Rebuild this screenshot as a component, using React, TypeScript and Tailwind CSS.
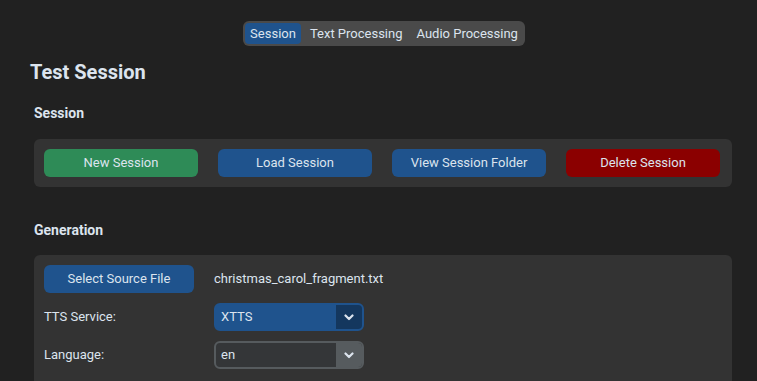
import React, { useState } from 'react';

const font = { fontFamily: 'Roboto, "Noto Sans", sans-serif' };

function Chevron() {
    return (
        <svg width="10" height="7" viewBox="0 0 10 7" className="block">
            <path d="M1.5 1.5 L5 5 L8.5 1.5" fill="none" stroke="#dce4ee" strokeWidth="2.2" strokeLinecap="round" strokeLinejoin="round" />
        </svg>
    );
}

function Combo({ value, blue }: { value: string; blue?: boolean }) {
    return (
        <div
            className={
                blue
                    ? 'flex h-[28px] w-[150px] rounded-[6px] overflow-hidden bg-[#1f538d] border-2 border-[#1f538d]'
                    : 'flex h-[28px] w-[150px] rounded-[6px] overflow-hidden bg-[#343638] border-2 border-[#565b5e]'
            }
        >
            <div className="flex-1 flex items-center pl-[5px] text-[13px] text-[#dce4ee]">{value}</div>
            <div className={blue ? 'w-[26px] flex items-center justify-center bg-[#14375e]' : 'w-[26px] flex items-center justify-center bg-[#565b5e]'}>
                <Chevron />
            </div>
        </div>
    );
}

export default function App() {
    const [tab, setTab] = useState('Session');
    const tabs = ['Session', 'Text Processing', 'Audio Processing'];

    return (
        <div className="w-[757px] h-[381px] overflow-hidden bg-[#212121] text-[#dce4ee]" style={font}>
            {/* tab bar */}
            <div className="flex justify-center pt-[21px] pl-[11px]">
                <div className="flex h-[25px] p-[2px] gap-[4px] rounded-[6px] bg-[#4a4a4a]">
                    {tabs.map((t) => (
                        <button
                            key={t}
                            onClick={() => setTab(t)}
                            className={
                                t === tab
                                    ? 'px-[5px] rounded-[4px] bg-[#1f538d] text-[13px] leading-[21px] text-[#dce4ee]'
                                    : 'px-[5px] rounded-[4px] text-[13px] leading-[21px] text-[#dce4ee]'
                            }
                        >
                            {t}
                        </button>
                    ))}
                </div>
            </div>

            <div className="pl-[30px] pr-[25px]">
                <h1 className="mt-[14px] text-[20px] leading-[24px] font-bold text-[#dce4ee]">Test Session</h1>

                <div className="pl-[4px]">
                    <h2 className="mt-[20px] text-[14px] leading-[18px] font-bold">Session</h2>
                    <div className="mt-[17px] flex gap-[20px] p-[10px] rounded-[6px] bg-[#333333]">
                        <button className="w-[154px] h-[28px] rounded-[6px] bg-[#2e8b57] text-[13px] text-[#dce4ee]">New Session</button>
                        <button className="w-[154px] h-[28px] rounded-[6px] bg-[#1f538d] text-[13px] text-[#dce4ee]">Load Session</button>
                        <button className="w-[154px] h-[28px] rounded-[6px] bg-[#1f538d] text-[13px] text-[#dce4ee]">View Session Folder</button>
                        <button className="w-[154px] h-[28px] rounded-[6px] bg-[#8b0000] text-[13px] text-[#dce4ee]">Delete Session</button>
                    </div>

                    <h2 className="mt-[34px] text-[14px] leading-[18px] font-bold">Generation</h2>
                    <div className="mt-[16px] flex flex-col gap-[10px] p-[10px] rounded-[6px] bg-[#333333] h-[200px]">
                        <div className="flex items-center">
                            <button className="w-[150px] h-[28px] rounded-[6px] bg-[#1f538d] text-[13px] text-[#dce4ee]">Select Source File</button>
                            <span className="ml-[20px] text-[13px]">christmas_carol_fragment.txt</span>
                        </div>
                        <div className="flex items-center">
                            <span className="w-[170px] text-[13px]">TTS Service:</span>
                            <Combo value="XTTS" blue />
                        </div>
                        <div className="flex items-center">
                            <span className="w-[170px] text-[13px]">Language:</span>
                            <Combo value="en" />
                        </div>
                    </div>
                </div>
            </div>
        </div>
    );
}
